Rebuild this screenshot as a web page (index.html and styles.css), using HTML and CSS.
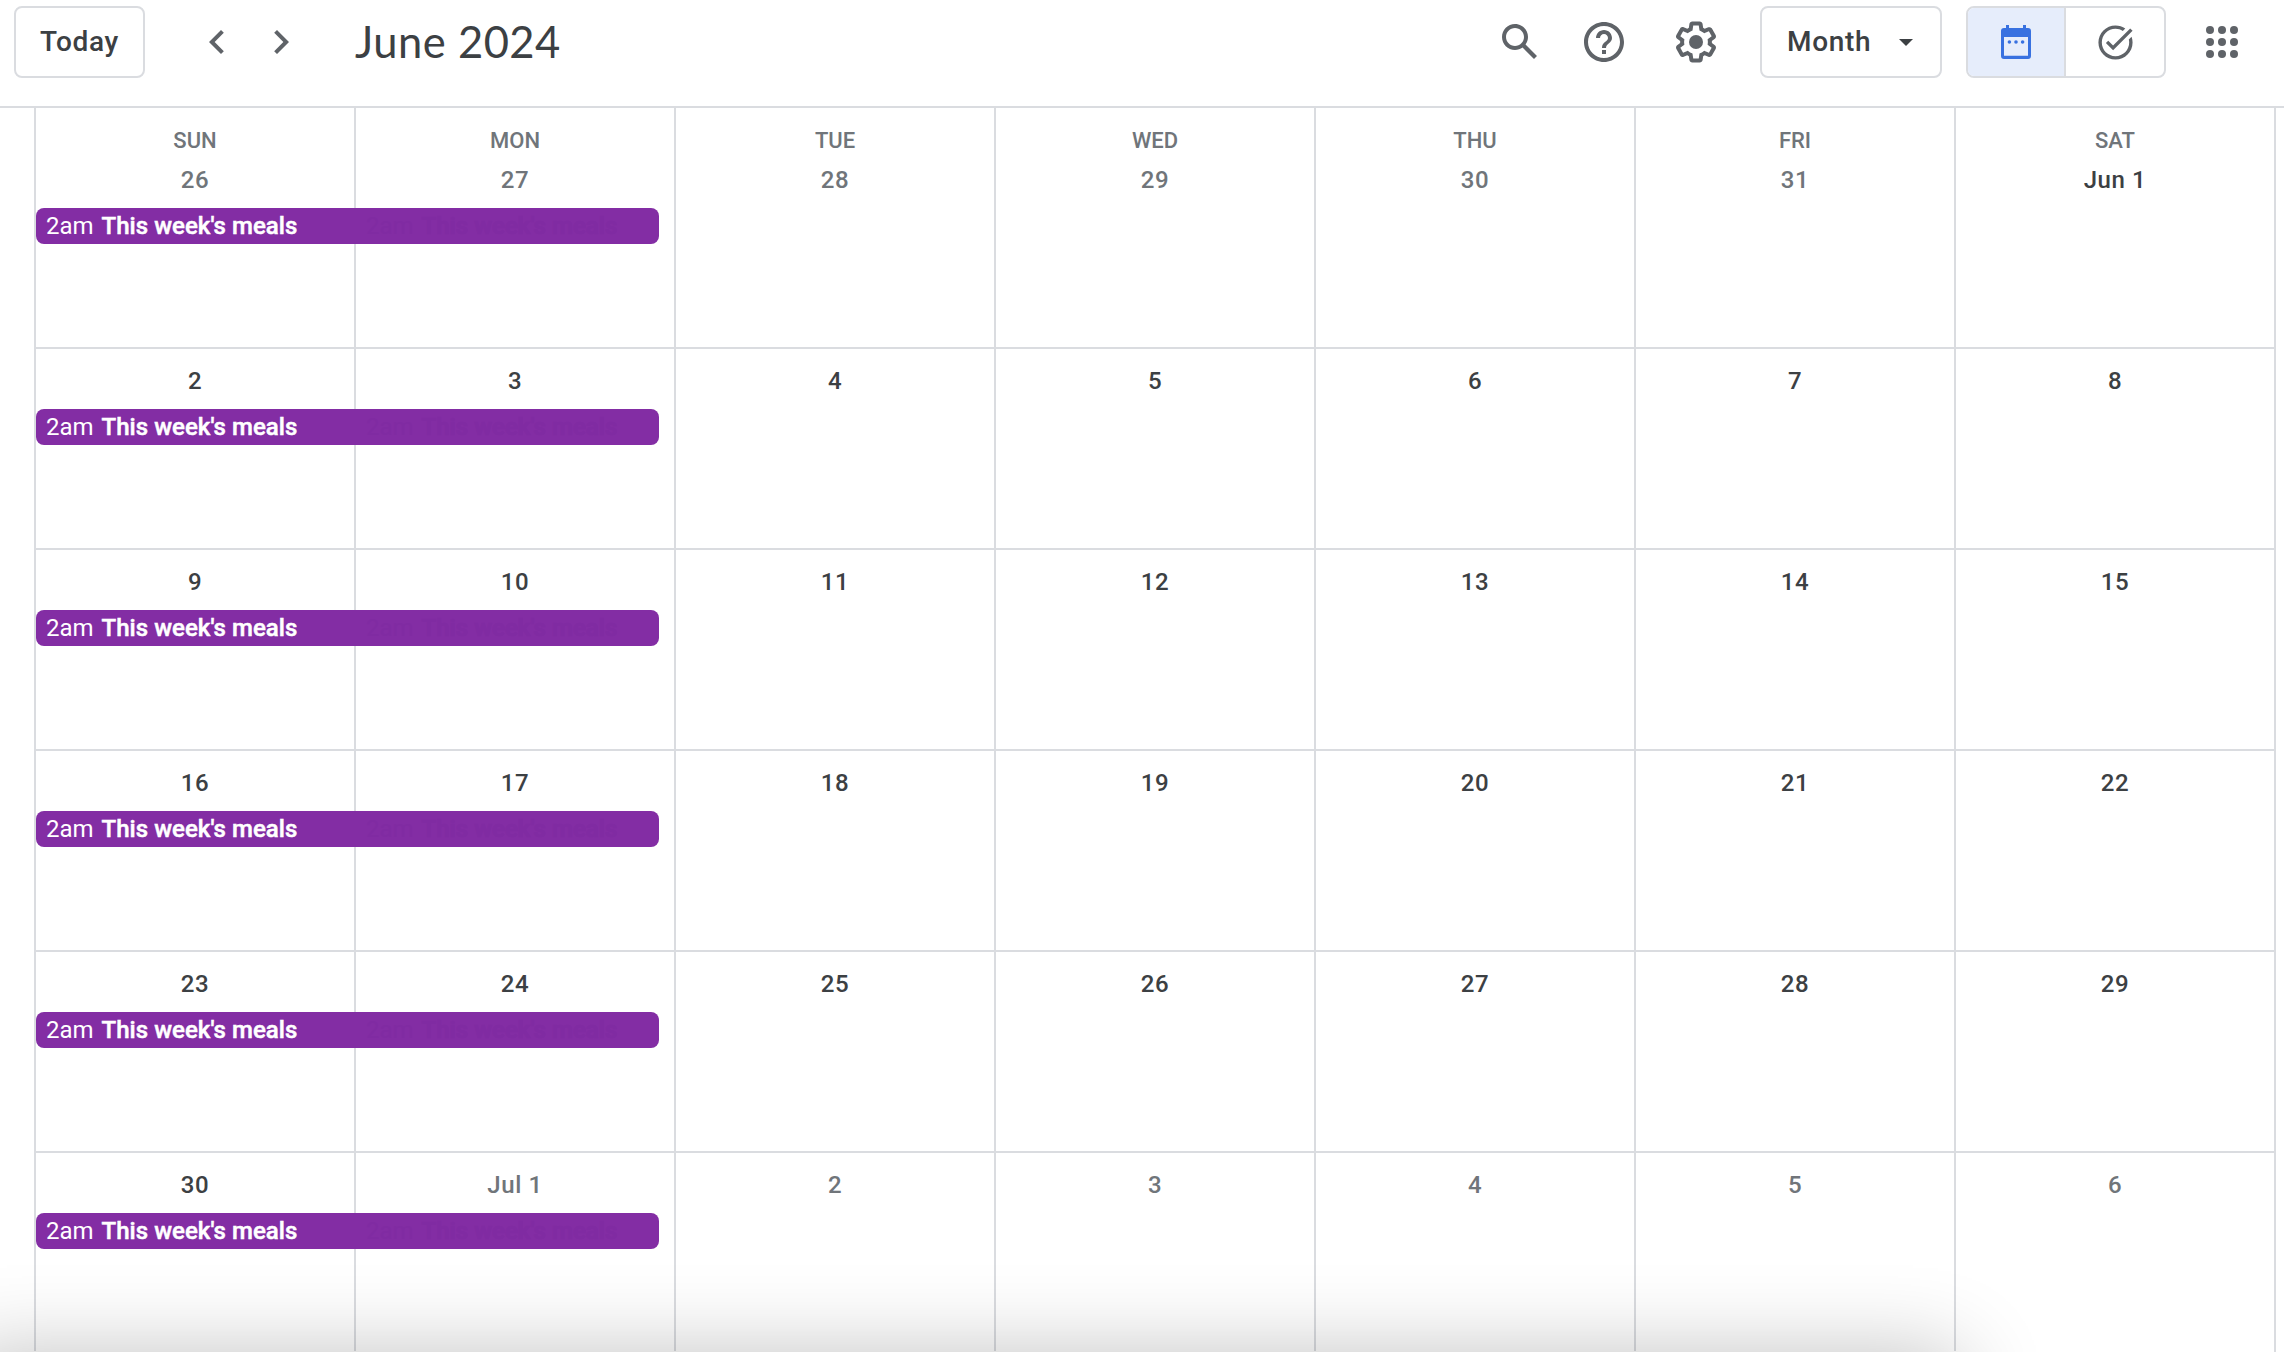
FILE: index.html
```html
<!DOCTYPE html>
<html lang="en">
<head>
<meta charset="utf-8">
<title>Calendar - June 2024</title>
<link rel="stylesheet" href="styles.css">
</head>
<body>
<header class="toolbar">
  <button class="btn today">Today</button>
  <nav class="pager">
    <svg class="icon" viewBox="0 0 24 24"><path d="M15.41 7.41L14 6l-6 6 6 6 1.41-1.41L10.83 12z"/></svg>
    <svg class="icon" viewBox="0 0 24 24"><path d="M10 6L8.59 7.41 13.17 12l-4.58 4.59L10 18l6-6z"/></svg>
  </nav>
  <h1 class="title">June 2024</h1>
  <div class="tools">
    <svg class="icon search" viewBox="0 0 24 24"><path d="M20.49 19l-5.73-5.73C15.53 12.2 16 10.91 16 9.5 16 5.91 13.09 3 9.5 3S3 5.91 3 9.5 5.91 16 9.5 16c1.41 0 2.7-.47 3.77-1.24L19 20.49 20.49 19zM5 9.5C5 7.01 7.01 5 9.5 5S14 7.01 14 9.5 11.99 14 9.5 14 5 11.99 5 9.5z"/></svg>
    <svg class="icon help" viewBox="0 0 24 24"><path d="M11 18h2v-2h-2v2zm1-16C6.48 2 2 6.48 2 12s4.48 10 10 10 10-4.48 10-10S17.52 2 12 2zm0 18c-4.41 0-8-3.59-8-8s3.59-8 8-8 8 3.59 8 8-3.59 8-8 8zm0-14c-2.21 0-4 1.79-4 4h2c0-1.1.9-2 2-2s2 .9 2 2c0 2-3 1.75-3 5h2c0-2.25 3-2.5 3-5 0-2.21-1.79-4-4-4z"/></svg>
    <svg class="icon settings" viewBox="0 0 24 24"><path d="M13.85 22.25h-3.7c-.74 0-1.36-.54-1.45-1.27l-.27-1.89c-.27-.14-.53-.29-.79-.46l-1.8.72c-.7.26-1.47-.03-1.81-.65L2.2 15.53c-.35-.66-.2-1.44.36-1.88l1.53-1.19c-.01-.15-.02-.3-.02-.46 0-.15.01-.31.02-.46l-1.52-1.19c-.59-.45-.74-1.26-.37-1.88l1.85-3.19c.34-.62 1.11-.9 1.79-.63l1.81.73c.26-.17.52-.32.78-.46l.27-1.91c.09-.7.71-1.25 1.44-1.25h3.7c.74 0 1.36.54 1.45 1.27l.27 1.89c.27.14.53.29.79.46l1.8-.72c.71-.26 1.48.03 1.82.65l1.84 3.18c.36.66.2 1.44-.36 1.88l-1.52 1.19c.01.15.02.3.02.46s-.01.31-.02.46l1.52 1.19c.56.45.72 1.23.37 1.86l-1.86 3.22c-.34.62-1.11.9-1.8.63l-1.8-.72c-.26.17-.52.32-.78.46l-.27 1.91c-.1.68-.72 1.22-1.46 1.22zm-3.23-2h2.76l.37-2.55.53-.22c.44-.18.88-.44 1.34-.78l.45-.34 2.38.96 1.38-2.4-2.03-1.58.07-.56c.03-.26.06-.51.06-.78s-.03-.53-.06-.78l-.07-.56 2.03-1.58-1.39-2.4-2.39.96-.45-.35c-.42-.32-.87-.58-1.33-.77l-.52-.22-.37-2.55h-2.76l-.37 2.55-.53.21c-.44.19-.88.44-1.34.79l-.45.33-2.38-.95-1.39 2.39 2.03 1.58-.07.56a7 7 0 0 0-.06.79c0 .26.02.53.06.78l.07.56-2.03 1.58 1.38 2.4 2.39-.96.45.35c.43.33.86.58 1.33.77l.53.22.38 2.55z"/><circle cx="12" cy="12" r="3.5"/></svg>
    <button class="btn view">Month<span class="caret"></span></button>
    <div class="switch">
      <span class="seg active"><svg class="icon" viewBox="0 0 48 48"><path fill-rule="evenodd" d="M14 7h3v3h14V7h3v3h2a3 3 0 0 1 3 3v25a3 3 0 0 1-3 3H12a3 3 0 0 1-3-3V13a3 3 0 0 1 3-3h2zM12 19v18.7h24V19z"/><circle cx="17.4" cy="24" r="1.8"/><circle cx="24" cy="24" r="1.8"/><circle cx="30.6" cy="24" r="1.8"/></svg></span>
      <span class="seg"><svg class="icon task" viewBox="0 0 24 24"><path d="M22 5.18L10.59 16.6l-4.24-4.24 1.41-1.41 2.83 2.83 10-10L22 5.18zM19.79 10.22c.13.57.21 1.17.21 1.78 0 4.42-3.58 8-8 8s-8-3.58-8-8 3.58-8 8-8c1.58 0 3.04.46 4.28 1.25l1.44-1.44C16.1 2.67 14.13 2 12 2 6.48 2 2 6.48 2 12s4.48 10 10 10 10-4.48 10-10c0-1.19-.22-2.33-.6-3.39l-1.61 1.61z"/></svg></span>
    </div>
    <svg class="icon apps" viewBox="0 0 24 24"><circle cx="6" cy="6" r="2"/><circle cx="12" cy="6" r="2"/><circle cx="18" cy="6" r="2"/><circle cx="6" cy="12" r="2"/><circle cx="12" cy="12" r="2"/><circle cx="18" cy="12" r="2"/><circle cx="6" cy="18" r="2"/><circle cx="12" cy="18" r="2"/><circle cx="18" cy="18" r="2"/></svg>
  </div>
</header>
<main class="month">
  <section class="week first">
    <div class="day other"><span class="dow">SUN</span><span class="num">26</span><div class="event"><span class="label">2am <b>This week's meals</b></span><span class="label echo">2am <b>This week's meals</b></span></div></div>
    <div class="day other"><span class="dow">MON</span><span class="num">27</span></div>
    <div class="day other"><span class="dow">TUE</span><span class="num">28</span></div>
    <div class="day other"><span class="dow">WED</span><span class="num">29</span></div>
    <div class="day other"><span class="dow">THU</span><span class="num">30</span></div>
    <div class="day other"><span class="dow">FRI</span><span class="num">31</span></div>
    <div class="day"><span class="dow">SAT</span><span class="num">Jun 1</span></div>
  </section>
  <section class="week">
    <div class="day"><span class="num">2</span><div class="event"><span class="label">2am <b>This week's meals</b></span><span class="label echo">2am <b>This week's meals</b></span></div></div>
    <div class="day"><span class="num">3</span></div>
    <div class="day"><span class="num">4</span></div>
    <div class="day"><span class="num">5</span></div>
    <div class="day"><span class="num">6</span></div>
    <div class="day"><span class="num">7</span></div>
    <div class="day"><span class="num">8</span></div>
  </section>
  <section class="week">
    <div class="day"><span class="num">9</span><div class="event"><span class="label">2am <b>This week's meals</b></span><span class="label echo">2am <b>This week's meals</b></span></div></div>
    <div class="day"><span class="num">10</span></div>
    <div class="day"><span class="num">11</span></div>
    <div class="day"><span class="num">12</span></div>
    <div class="day"><span class="num">13</span></div>
    <div class="day"><span class="num">14</span></div>
    <div class="day"><span class="num">15</span></div>
  </section>
  <section class="week">
    <div class="day"><span class="num">16</span><div class="event"><span class="label">2am <b>This week's meals</b></span><span class="label echo">2am <b>This week's meals</b></span></div></div>
    <div class="day"><span class="num">17</span></div>
    <div class="day"><span class="num">18</span></div>
    <div class="day"><span class="num">19</span></div>
    <div class="day"><span class="num">20</span></div>
    <div class="day"><span class="num">21</span></div>
    <div class="day"><span class="num">22</span></div>
  </section>
  <section class="week">
    <div class="day"><span class="num">23</span><div class="event"><span class="label">2am <b>This week's meals</b></span><span class="label echo">2am <b>This week's meals</b></span></div></div>
    <div class="day"><span class="num">24</span></div>
    <div class="day"><span class="num">25</span></div>
    <div class="day"><span class="num">26</span></div>
    <div class="day"><span class="num">27</span></div>
    <div class="day"><span class="num">28</span></div>
    <div class="day"><span class="num">29</span></div>
  </section>
  <section class="week">
    <div class="day"><span class="num">30</span><div class="event"><span class="label">2am <b>This week's meals</b></span><span class="label echo">2am <b>This week's meals</b></span></div></div>
    <div class="day other"><span class="num">Jul 1</span></div>
    <div class="day other"><span class="num">2</span></div>
    <div class="day other"><span class="num">3</span></div>
    <div class="day other"><span class="num">4</span></div>
    <div class="day other"><span class="num">5</span></div>
    <div class="day other"><span class="num">6</span></div>
  </section>
</main>
<div class="sheet-shadow"></div>
</body>
</html>
```
FILE: styles.css
```css
* { box-sizing: border-box; }
body {
  margin: 0;
  width: 2284px;
  height: 1352px;
  overflow: hidden;
  position: relative;
  background: #fff;
  color: #3c4043;
  font-family: Roboto, "Liberation Sans", sans-serif;
}
.toolbar {
  display: flex;
  align-items: center;
  height: 108px;
  padding: 6px 38px 28px 14px;
  border-bottom: 2px solid #dadce0;
}
.icon { display: block; flex: none; width: 48px; height: 48px; fill: #5f6368; }
.btn {
  height: 72px;
  border: 2px solid #dadce0;
  border-radius: 8px;
  background: #fff;
  padding: 0;
  color: #3c4043;
  font: 500 28px/68px Roboto, sans-serif;
  letter-spacing: 0.7px;
}
.today { width: 131px; }
.pager { display: flex; gap: 16px; margin-left: 48px; }
.title {
  margin: 0 0 0 50px;
  padding-bottom: 2px;
  font: 400 43.5px/56px Lato, Roboto, sans-serif;
  letter-spacing: 0.5px;
}
.tools { display: flex; align-items: center; margin-left: auto; }
.help { margin-left: 36px; }
.settings { margin-left: 44px; }
.view {
  display: flex;
  align-items: center;
  width: 182px;
  margin-left: 40px;
  padding-left: 25px;
}
.caret {
  margin-left: auto;
  margin-right: 27px;
  border: 7px solid transparent;
  border-top-color: #3c4043;
  border-bottom: 0;
}
.switch {
  display: flex;
  width: 200px;
  height: 72px;
  margin-left: 24px;
  border: 2px solid #dadce0;
  border-radius: 8px;
  overflow: hidden;
}
.seg { display: flex; flex: 1; align-items: center; justify-content: center; }
.seg.active { flex: 0 0 98px; background: #e6edfb; border-right: 2px solid #dadce0; }
.active .icon { fill: #3871e0; }
.task { width: 41px; height: 41px; }
.apps { margin-left: 32px; }
.month {
  width: 2242px;
  height: 1244px;
  margin-left: 34px;
  border-right: 2px solid #dadce0;
}
.week { display: grid; grid-template-columns: repeat(7, 320px); height: 201px; border-top: 2px solid #dadce0; }
.week.first { height: 239px; border-top: 0; }
.day {
  position: relative;
  display: flex;
  flex-direction: column;
  align-items: center;
  padding-top: 17px;
  border-left: 2px solid #dadce0;
}
/* column rules run unbroken through the row rules */
.week:not(.first) .day { margin-top: -2px; padding-top: 16px; }
.dow { font-size: 22px; line-height: 32px; font-weight: 500; color: #70757a; }
.num { font-size: 24px; line-height: 28px; font-weight: 500; letter-spacing: 0.6px; padding-top: 4px; }
.first .num { padding-top: 9px; }
.other .num { color: #70757a; }
.event {
  position: absolute;
  z-index: 1;
  left: 0;
  top: 62px;
  display: flex;
  width: 623px;
  height: 36px;
  padding-left: 10px;
  border-radius: 8px;
  background: #832da4;
}
.first .event { top: 100px; }
.label { flex: 0 0 320px; color: #fff; font-size: 24px; line-height: 36px; white-space: nowrap; }
.label b { font-weight: 500; margin-left: 2px; letter-spacing: 0.05px; -webkit-text-stroke: 0.5px currentColor; }
.label.echo { flex-basis: 290px; color: #802ba2; }
.week:last-child { height: 200px; }
/* soft shadow cast by a panel docked below the viewport */
.sheet-shadow {
  position: absolute;
  left: 0;
  bottom: 0;
  width: 2284px;
  height: 110px;
  overflow: hidden;
  z-index: 2;
}
.sheet-shadow::before {
  content: "";
  display: block;
  width: 2000px;
  height: 600px;
  margin: 110px 0 0 -40px;
  box-shadow: 0 0 80px rgba(0, 0, 0, 0.24);
}
```
